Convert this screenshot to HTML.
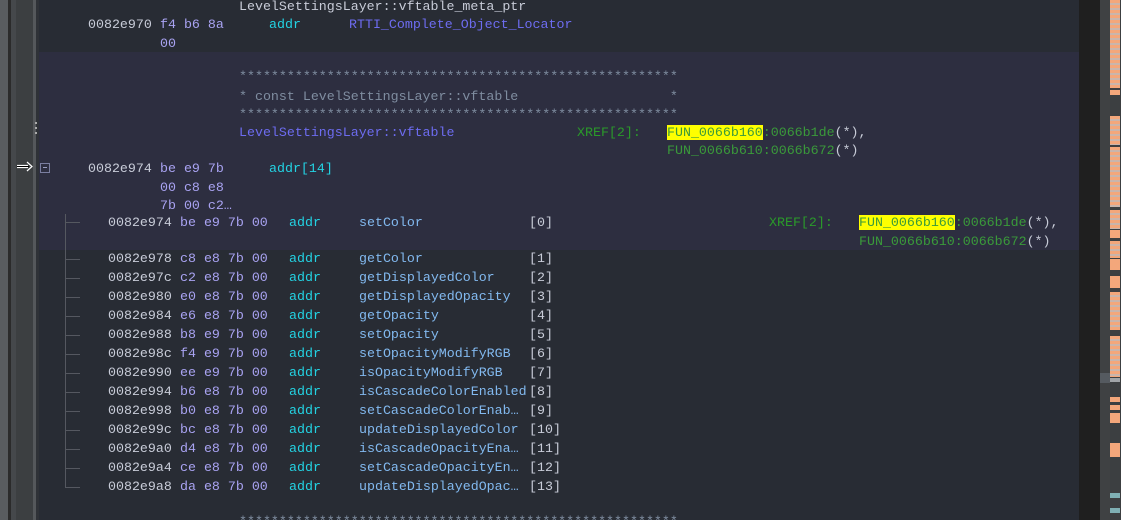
<!DOCTYPE html>
<html style="overflow:hidden;width:1121px;height:520px"><head><meta charset="utf-8"><style>
*{margin:0;padding:0}
body{width:1121px;height:520px;overflow:hidden;background:#282c34;position:relative;font-family:"Liberation Mono",monospace;font-size:13.3px;}
.t{position:absolute;white-space:pre;line-height:16px;margin-top:1px}
.a{color:#c8ccd8}.b{color:#a9a3f2}.k{color:#23d3e3}.n{color:#82b9ef}.i{color:#c8ccd8}
.c{color:#7f8da0}.l{color:#6d6cf0}.x{color:#2a9a2a}.f{color:#3a9a3a}.w{color:#c8ccd8}
.y{background:#ffff00;color:#3a9a3a}
.r{position:absolute}
.h{position:absolute;left:65px;width:15px;height:1px;background:#555860}
</style></head><body>
<div class="r" style="left:0;top:0;width:8px;height:520px;background:#595c5f"></div>
<div class="r" style="left:8px;top:0;width:3px;height:520px;background:#2b2b2b"></div>
<div class="r" style="left:11px;top:0;width:5px;height:520px;background:#45484b"></div>
<div class="r" style="left:16px;top:0;width:17px;height:520px;background:#3c3f41"></div>
<div class="r" style="left:33px;top:0;width:3px;height:520px;background:#55585b"></div>
<div class="r" style="left:36px;top:0;width:3px;height:520px;background:#2f3237"></div>
<div class="r" style="left:39px;top:52px;width:1040px;height:198px;background:#2d2e40"></div>
<div class="r" style="left:1079px;top:0;width:21px;height:520px;background:#1f1f1f"></div>
<div class="r" style="left:1100px;top:0;width:10px;height:520px;background:#3f4143"></div>
<div class="r" style="left:1100px;top:373px;width:10px;height:10px;background:#555a60"></div>
<div class="r" style="left:1110px;top:0;width:11px;height:520px;background:#3c3f41"></div>
<div class="r" style="left:1110px;top:0;width:10px;height:88px;background:repeating-linear-gradient(#f3a77b 0 3px,#c9b5ac 3px 5px)"></div>
<div class="r" style="left:1110px;top:90px;width:10px;height:5px;background:#f3a77b"></div>
<div class="r" style="left:1110px;top:116px;width:10px;height:29px;background:repeating-linear-gradient(#f3a77b 0 3px,#c9b5ac 3px 5px)"></div>
<div class="r" style="left:1110px;top:147px;width:10px;height:60px;background:repeating-linear-gradient(#f3a77b 0 3px,#c9b5ac 3px 5px)"></div>
<div class="r" style="left:1110px;top:210px;width:10px;height:19px;background:repeating-linear-gradient(#f3a77b 0 3px,#c9b5ac 3px 5px)"></div>
<div class="r" style="left:1110px;top:230px;width:10px;height:8px;background:#f3a77b"></div>
<div class="r" style="left:1110px;top:241px;width:10px;height:17px;background:repeating-linear-gradient(#f3a77b 0 3px,#c9b5ac 3px 5px)"></div>
<div class="r" style="left:1110px;top:259px;width:10px;height:11px;background:#f3a77b"></div>
<div class="r" style="left:1110px;top:276px;width:10px;height:12px;background:#f3a77b"></div>
<div class="r" style="left:1110px;top:292px;width:10px;height:38px;background:repeating-linear-gradient(#f3a77b 0 3px,#c9b5ac 3px 5px)"></div>
<div class="r" style="left:1110px;top:336px;width:10px;height:41px;background:repeating-linear-gradient(#f3a77b 0 3px,#c9b5ac 3px 5px)"></div>
<div class="r" style="left:1110px;top:378px;width:10px;height:4px;background:#a0a4a8"></div>
<div class="r" style="left:1110px;top:397px;width:10px;height:5px;background:#f3a77b"></div>
<div class="r" style="left:1110px;top:405px;width:10px;height:5px;background:#f3a77b"></div>
<div class="r" style="left:1110px;top:413px;width:10px;height:10px;background:#f3a77b"></div>
<div class="r" style="left:1110px;top:443px;width:10px;height:14px;background:#f3a77b"></div>
<div class="r" style="left:1110px;top:493px;width:10px;height:5px;background:#7fb0b4"></div>
<div class="r" style="left:1110px;top:508px;width:10px;height:5px;background:#7fb0b4"></div>
<!-- gutter marks -->
<div class="r" style="left:35px;top:122px;width:2px;height:2px;background:#aaa"></div>
<div class="r" style="left:35px;top:127px;width:2px;height:2px;background:#aaa"></div>
<div class="r" style="left:35px;top:132px;width:2px;height:2px;background:#aaa"></div>
<svg class="r" style="left:16px;top:160px" width="18" height="12"><path d="M1 5.5H12M1 7.5H12M11 2L16 6.5L11 11" stroke="#fff" stroke-width="1.2" fill="none"/><path d="M1 6.5H13" stroke="#000" stroke-width="1"/></svg>
<div class="r" style="left:40px;top:163px;width:8px;height:8px;border:1px solid #7a7ea0"></div>
<div class="r" style="left:43px;top:167px;width:4px;height:1px;background:#9a9ec0"></div>
<!-- tree lines -->
<div class="r" style="left:65px;top:214px;width:1px;height:273px;background:#555860"></div>
<div class="h" style="top:222px"></div>
<div class="h" style="top:259px"></div>
<div class="h" style="top:278px"></div>
<div class="h" style="top:297px"></div>
<div class="h" style="top:316px"></div>
<div class="h" style="top:335px"></div>
<div class="h" style="top:354px"></div>
<div class="h" style="top:373px"></div>
<div class="h" style="top:392px"></div>
<div class="h" style="top:411px"></div>
<div class="h" style="top:430px"></div>
<div class="h" style="top:449px"></div>
<div class="h" style="top:468px"></div>
<div class="h" style="top:487px"></div>

<div class="t w" style="left:239px;top:-2px">LevelSettingsLayer::vftable_meta_ptr</div>
<div class="t a" style="left:88px;top:16px">0082e970</div><div class="t b" style="left:160px;top:16px">f4 b6 8a</div>
<div class="t k" style="left:269px;top:16px">addr</div><div class="t l" style="left:349px;top:16px">RTTI_Complete_Object_Locator</div>
<div class="t b" style="left:160px;top:35px">00</div>
<div class="t c" style="left:239px;top:68px">*******************************************************</div>
<div class="t c" style="left:239px;top:88px">* const LevelSettingsLayer::vftable                   *</div>
<div class="t c" style="left:239px;top:106px">*******************************************************</div>
<div class="t l" style="left:239px;top:124px">LevelSettingsLayer::vftable</div>
<div class="t x" style="left:577px;top:124px">XREF[2]:</div>
<div class="t f" style="left:667px;top:124px"><span class="y">FUN_0066b160</span>:0066b1de<span class="w">(*)</span><span class="w">,</span></div>
<div class="t f" style="left:667px;top:142px">FUN_0066b610:0066b672<span class="w">(*)</span></div>
<div class="t a" style="left:88px;top:160px">0082e974</div><div class="t b" style="left:160px;top:160px">be e9 7b</div>
<div class="t k" style="left:269px;top:160px">addr[14]</div>
<div class="t b" style="left:160px;top:179px">00 c8 e8</div>
<div class="t b" style="left:160px;top:197px">7b 00 c2…</div>
<div class="t x" style="left:769px;top:214px">XREF[2]:</div>
<div class="t f" style="left:859px;top:214px"><span class="y">FUN_0066b160</span>:0066b1de<span class="w">(*)</span><span class="w">,</span></div>
<div class="t f" style="left:859px;top:233px">FUN_0066b610:0066b672<span class="w">(*)</span></div>

<div class="t a" style="left:108px;top:214px">0082e974</div><div class="t b" style="left:180px;top:214px">be e9 7b 00</div><div class="t k" style="left:289px;top:214px">addr</div><div class="t n" style="left:359px;top:214px">setColor</div><div class="t i" style="left:529px;top:214px">[0]</div>
<div class="t a" style="left:108px;top:250px">0082e978</div><div class="t b" style="left:180px;top:250px">c8 e8 7b 00</div><div class="t k" style="left:289px;top:250px">addr</div><div class="t n" style="left:359px;top:250px">getColor</div><div class="t i" style="left:529px;top:250px">[1]</div>
<div class="t a" style="left:108px;top:269px">0082e97c</div><div class="t b" style="left:180px;top:269px">c2 e8 7b 00</div><div class="t k" style="left:289px;top:269px">addr</div><div class="t n" style="left:359px;top:269px">getDisplayedColor</div><div class="t i" style="left:529px;top:269px">[2]</div>
<div class="t a" style="left:108px;top:288px">0082e980</div><div class="t b" style="left:180px;top:288px">e0 e8 7b 00</div><div class="t k" style="left:289px;top:288px">addr</div><div class="t n" style="left:359px;top:288px">getDisplayedOpacity</div><div class="t i" style="left:529px;top:288px">[3]</div>
<div class="t a" style="left:108px;top:307px">0082e984</div><div class="t b" style="left:180px;top:307px">e6 e8 7b 00</div><div class="t k" style="left:289px;top:307px">addr</div><div class="t n" style="left:359px;top:307px">getOpacity</div><div class="t i" style="left:529px;top:307px">[4]</div>
<div class="t a" style="left:108px;top:326px">0082e988</div><div class="t b" style="left:180px;top:326px">b8 e9 7b 00</div><div class="t k" style="left:289px;top:326px">addr</div><div class="t n" style="left:359px;top:326px">setOpacity</div><div class="t i" style="left:529px;top:326px">[5]</div>
<div class="t a" style="left:108px;top:345px">0082e98c</div><div class="t b" style="left:180px;top:345px">f4 e9 7b 00</div><div class="t k" style="left:289px;top:345px">addr</div><div class="t n" style="left:359px;top:345px">setOpacityModifyRGB</div><div class="t i" style="left:529px;top:345px">[6]</div>
<div class="t a" style="left:108px;top:364px">0082e990</div><div class="t b" style="left:180px;top:364px">ee e9 7b 00</div><div class="t k" style="left:289px;top:364px">addr</div><div class="t n" style="left:359px;top:364px">isOpacityModifyRGB</div><div class="t i" style="left:529px;top:364px">[7]</div>
<div class="t a" style="left:108px;top:383px">0082e994</div><div class="t b" style="left:180px;top:383px">b6 e8 7b 00</div><div class="t k" style="left:289px;top:383px">addr</div><div class="t n" style="left:359px;top:383px">isCascadeColorEnabled</div><div class="t i" style="left:529px;top:383px">[8]</div>
<div class="t a" style="left:108px;top:402px">0082e998</div><div class="t b" style="left:180px;top:402px">b0 e8 7b 00</div><div class="t k" style="left:289px;top:402px">addr</div><div class="t n" style="left:359px;top:402px">setCascadeColorEnab…</div><div class="t i" style="left:529px;top:402px">[9]</div>
<div class="t a" style="left:108px;top:421px">0082e99c</div><div class="t b" style="left:180px;top:421px">bc e8 7b 00</div><div class="t k" style="left:289px;top:421px">addr</div><div class="t n" style="left:359px;top:421px">updateDisplayedColor</div><div class="t i" style="left:529px;top:421px">[10]</div>
<div class="t a" style="left:108px;top:440px">0082e9a0</div><div class="t b" style="left:180px;top:440px">d4 e8 7b 00</div><div class="t k" style="left:289px;top:440px">addr</div><div class="t n" style="left:359px;top:440px">isCascadeOpacityEna…</div><div class="t i" style="left:529px;top:440px">[11]</div>
<div class="t a" style="left:108px;top:459px">0082e9a4</div><div class="t b" style="left:180px;top:459px">ce e8 7b 00</div><div class="t k" style="left:289px;top:459px">addr</div><div class="t n" style="left:359px;top:459px">setCascadeOpacityEn…</div><div class="t i" style="left:529px;top:459px">[12]</div>
<div class="t a" style="left:108px;top:478px">0082e9a8</div><div class="t b" style="left:180px;top:478px">da e8 7b 00</div><div class="t k" style="left:289px;top:478px">addr</div><div class="t n" style="left:359px;top:478px">updateDisplayedOpac…</div><div class="t i" style="left:529px;top:478px">[13]</div>
<div class="r" style="left:239px;top:512px;width:440px;height:8px;overflow:hidden"><div class="t c" style="left:0;top:2px;margin:0">*******************************************************</div></div>
</body></html>
